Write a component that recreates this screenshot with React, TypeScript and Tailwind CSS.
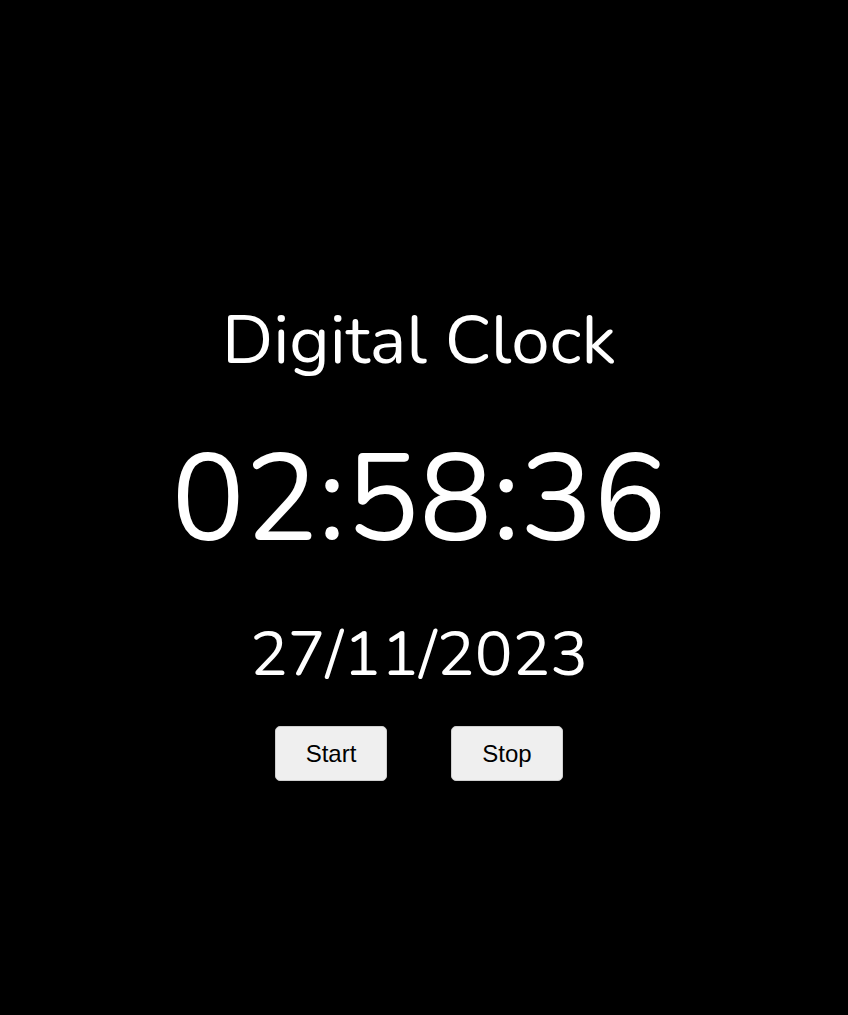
export default function App() {
  return (
    <div className="min-h-screen bg-black flex flex-col items-center pr-[10px] text-white font-['Nunito','Noto_Sans',sans-serif]">
      <h1 className="mt-[306px] text-[69px] leading-[69px]">Digital Clock</h1>
      <div className="mt-[64px] text-[122px] leading-[122px]">02:58:36</div>
      <div className="mt-[62px] text-[63px] leading-[63px]">27/11/2023</div>
      <div className="mt-[40px] flex gap-16">
        <button className="w-[112px] h-[55px] rounded-[5px] border border-[#cfcfcf] bg-[#efefef] text-black text-[24px] font-['Liberation_Sans',Arial,sans-serif]">
          Start
        </button>
        <button className="w-[112px] h-[55px] rounded-[5px] border border-[#cfcfcf] bg-[#efefef] text-black text-[24px] font-['Liberation_Sans',Arial,sans-serif]">
          Stop
        </button>
      </div>
    </div>
  );
}
